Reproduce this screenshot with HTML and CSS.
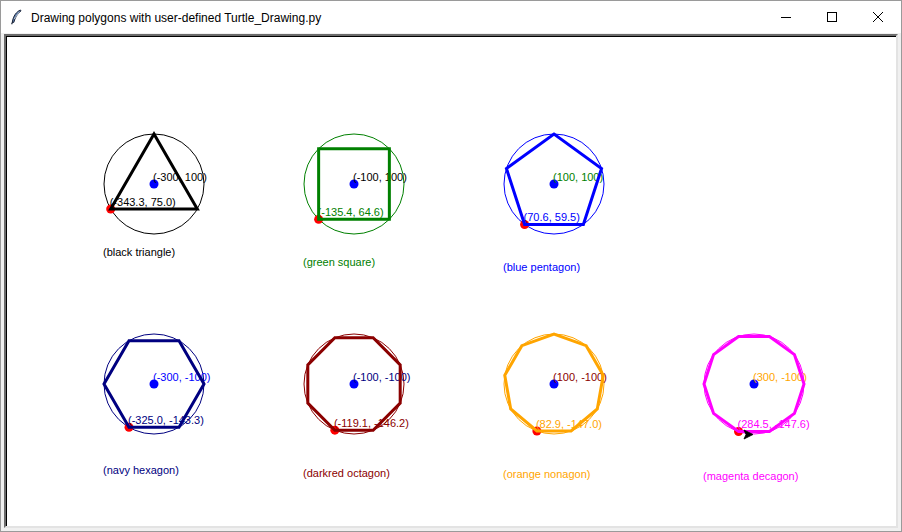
FILE: index.html
```html
<!DOCTYPE html>
<html>
<head>
<meta charset="utf-8">
<title>Drawing polygons with user-defined Turtle_Drawing.py</title>
<link rel="stylesheet" href="styles.css">
</head>
<body>
<div class="window">
  <div class="titlebar">
    <svg class="app-icon" width="16" height="16" viewBox="0 0 16 16">
      <path d="M12.5 1 C8.5 2.5 5.2 7 4.3 13.2 L5.8 13.4 C7 8.5 9.5 4.8 13 1.8 Z" fill="#5f80b0" stroke="#1b2438" stroke-width="1" stroke-linejoin="round"/>
      <path d="M4.6 13 L3.6 15.2" stroke="#1b2438" stroke-width="1.2"/>
      <path d="M11.4 2.8 L6.2 10" stroke="#dce6f4" stroke-width="0.7"/>
    </svg>
    <span class="title">Drawing polygons with user-defined Turtle_Drawing.py</span>
    <div class="controls">
      <div class="ctl">
        <svg width="12" height="12" viewBox="0 0 12 12"><path d="M1 6.5 H11" stroke="#000" stroke-width="1"/></svg>
      </div>
      <div class="ctl">
        <svg width="12" height="12" viewBox="0 0 12 12"><rect x="1.5" y="1.5" width="9" height="9" fill="none" stroke="#000" stroke-width="1"/></svg>
      </div>
      <div class="ctl">
        <svg width="12" height="12" viewBox="0 0 12 12"><path d="M1 1 L11 11 M11 1 L1 11" stroke="#000" stroke-width="1"/></svg>
      </div>
    </div>
  </div>
  <div class="client">
    <div class="canvas">
      <svg class="drawing" width="890" height="490" viewBox="6 36 890 490">
        <!-- black triangle -->
        <circle cx="154" cy="184" r="50" fill="none" stroke="#000" stroke-width="1"/>
        <circle cx="154" cy="184" r="4.5" fill="#0000ff"/>
        <text x="153" y="180.5" fill="#000">(-300, 100)</text>
        <circle cx="110.7" cy="209" r="4.5" fill="#ff0000"/>
        <text x="109.7" y="205.5" fill="#000">(-343.3, 75.0)</text>
        <polygon points="110.7,209 197.3,209 154,134" fill="none" stroke="#000" stroke-width="3"/>
        <text x="103" y="256" fill="#000">(black triangle)</text>

        <!-- green square -->
        <circle cx="354" cy="184" r="50" fill="none" stroke="#008000" stroke-width="1"/>
        <circle cx="354" cy="184" r="4.5" fill="#0000ff"/>
        <text x="353" y="180.5" fill="#000">(-100, 100)</text>
        <circle cx="318.64" cy="219.36" r="4.5" fill="#ff0000"/>
        <text x="317.6" y="215.9" fill="#008000">(-135.4, 64.6)</text>
        <polygon points="318.64,219.36 389.36,219.36 389.36,148.64 318.64,148.64" fill="none" stroke="#008000" stroke-width="3"/>
        <text x="303" y="266" fill="#008000">(green square)</text>

        <!-- blue pentagon -->
        <circle cx="554" cy="184" r="50" fill="none" stroke="#0000ff" stroke-width="1"/>
        <circle cx="554" cy="184" r="4.5" fill="#0000ff"/>
        <text x="553" y="180.5" fill="#008000">(100, 100)</text>
        <circle cx="524.61" cy="224.45" r="4.5" fill="#ff0000"/>
        <text x="523.6" y="221" fill="#0000ff">(70.6, 59.5)</text>
        <polygon points="524.61,224.45 583.39,224.45 601.55,168.55 554,134 506.45,168.55" fill="none" stroke="#0000ff" stroke-width="3"/>
        <text x="503" y="271" fill="#0000ff">(blue pentagon)</text>

        <!-- navy hexagon -->
        <circle cx="154" cy="384" r="50" fill="none" stroke="#000080" stroke-width="1"/>
        <circle cx="154" cy="384" r="4.5" fill="#0000ff"/>
        <text x="153" y="380.5" fill="#0000ff">(-300, -100)</text>
        <circle cx="129" cy="427.3" r="4.5" fill="#ff0000"/>
        <text x="128" y="423.8" fill="#000080">(-325.0, -143.3)</text>
        <polygon points="129,427.3 179,427.3 204,384 179,340.7 129,340.7 104,384" fill="none" stroke="#000080" stroke-width="3"/>
        <text x="103" y="474" fill="#000080">(navy hexagon)</text>

        <!-- darkred octagon -->
        <circle cx="354" cy="384" r="50" fill="none" stroke="#8b0000" stroke-width="1"/>
        <circle cx="354" cy="384" r="4.5" fill="#0000ff"/>
        <text x="353" y="380.5" fill="#000080">(-100, -100)</text>
        <circle cx="334.87" cy="430.19" r="4.5" fill="#ff0000"/>
        <text x="333.9" y="426.7" fill="#8b0000">(-119.1, -146.2)</text>
        <polygon points="334.87,430.19 373.13,430.19 400.19,403.13 400.19,364.87 373.13,337.81 334.87,337.81 307.81,364.87 307.81,403.13" fill="none" stroke="#8b0000" stroke-width="3"/>
        <text x="303" y="477" fill="#8b0000">(darkred octagon)</text>

        <!-- orange nonagon -->
        <circle cx="554" cy="384" r="50" fill="none" stroke="#ffa500" stroke-width="1"/>
        <circle cx="554" cy="384" r="4.5" fill="#0000ff"/>
        <text x="553" y="380.5" fill="#8b0000">(100, -100)</text>
        <circle cx="536.9" cy="430.98" r="4.5" fill="#ff0000"/>
        <text x="535.9" y="427.5" fill="#ffa500">(82.9, -147.0)</text>
        <polygon points="536.9,430.98 571.1,430.98 597.3,409 603.24,375.32 586.14,345.7 554,334 521.86,345.7 504.76,375.32 510.7,409" fill="none" stroke="#ffa500" stroke-width="3"/>
        <text x="503" y="478" fill="#ffa500">(orange nonagon)</text>

        <!-- magenta decagon -->
        <circle cx="754" cy="384" r="50" fill="none" stroke="#ff00ff" stroke-width="1"/>
        <circle cx="754" cy="384" r="4.5" fill="#0000ff"/>
        <text x="753" y="380.5" fill="#ffa500">(300, -100)</text>
        <circle cx="738.55" cy="431.55" r="4.5" fill="#ff0000"/>
        <text x="737.5" y="428" fill="#ff00ff">(284.5, -147.6)</text>
        <polygon points="738.55,431.55 769.45,431.55 794.45,413.39 804,384 794.45,354.61 769.45,336.45 738.55,336.45 713.55,354.61 704,384 713.55,413.39" fill="none" stroke="#ff00ff" stroke-width="3"/>
        <text x="703" y="480" fill="#ff00ff">(magenta decagon)</text>
        <polygon points="753,434.5 744,430 746,434.5 744,439" fill="#000" stroke="#000" stroke-width="0.8"/>
      </svg>
    </div>
  </div>
</div>
</body>
</html>
```
FILE: styles.css
```css
html, body {
  margin: 0;
  padding: 0;
  background: #ffffff;
}

.window {
  width: 900px;
  height: 530px;
  border: 1px solid #9a9a9a;
  display: flex;
  flex-direction: column;
  background: #f0f0f0;
}

.titlebar {
  height: 32px;
  background: #ffffff;
  display: flex;
  align-items: center;
  font-family: "Liberation Sans", Arial, sans-serif;
  font-size: 12px;
  color: #000;
}

.app-icon {
  margin-left: 7px;
  margin-right: 7px;
  flex: none;
}

.title {
  flex: 1;
  white-space: nowrap;
  padding-top: 1px;
}

.controls {
  display: flex;
  height: 32px;
}

.ctl {
  width: 46px;
  height: 32px;
  display: flex;
  align-items: center;
  justify-content: center;
}

.client {
  flex: 1;
  padding: 1px 3px 3px 3px;
  display: flex;
}

.canvas {
  flex: 1;
  background: #ffffff;
  border-style: solid;
  border-width: 2px;
  border-color: #6b6b6b #e3e3e3 #e3e3e3 #6b6b6b;
  box-shadow: inset 1px 1px 0 #000;
  overflow: hidden;
}

.drawing {
  display: block;
  font-family: "Liberation Sans", Arial, sans-serif;
  font-size: 11px;
}
```
